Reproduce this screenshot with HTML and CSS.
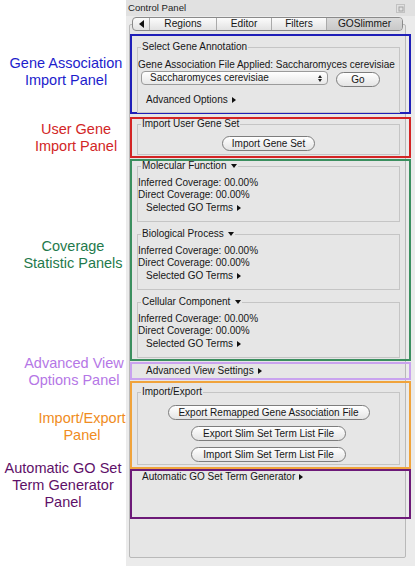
FILE: index.html
```html
<!DOCTYPE html>
<html>
<head>
<meta charset="utf-8">
<title>Control Panel</title>
<link rel="stylesheet" href="styles.css">
</head>
<body>
<div class="page">
  <div class="titlebar">
    <span class="title">Control Panel</span>
    <svg class="detach" viewBox="0 0 9 9" width="9" height="9">
      <rect x="0.5" y="0.5" width="8" height="8" fill="none" stroke="#a3a3a3" stroke-dasharray="1 1"/>
      <rect x="3" y="3" width="4" height="4" fill="none" stroke="#a3a3a3"/>
    </svg>
  </div>

  <div class="panel-bg"></div>

  <div class="tabs">
    <div class="tab"><span class="tri-left"></span></div>
    <div class="tab">Regions</div>
    <div class="tab">Editor</div>
    <div class="tab">Filters</div>
    <div class="tab selected">GOSlimmer</div>
  </div>

  <div class="label label-blue">Gene Association<br>Import Panel</div>
  <section class="box box-blue">
    <fieldset class="group group-annot">
      <legend>Select Gene Annotation</legend>
      <div class="line">Gene Association File Applied: Saccharomyces cerevisiae</div>
      <div class="select-row">
        <div class="select">
          <span>Saccharomyces cerevisiae</span>
          <span class="stepper"><span class="tri-up-s"></span><span class="tri-down-s"></span></span>
        </div>
        <button class="btn btn-go">Go</button>
      </div>
      <div class="disclosure">Advanced Options <span class="tri-right"></span></div>
    </fieldset>
  </section>

  <div class="label label-red">User Gene<br>Import Panel</div>
  <section class="box box-red">
    <fieldset class="group group-import">
      <legend>Import User Gene Set</legend>
      <button class="btn btn-center btn-import">Import Gene Set</button>
    </fieldset>
  </section>

  <div class="label label-green">Coverage<br>Statistic Panels</div>
  <section class="box box-green">
    <fieldset class="group group-stat">
      <legend>Molecular Function <span class="tri-down"></span></legend>
      <div class="line">Inferred Coverage: 00.00%</div>
      <div class="line">Direct Coverage: 00.00%</div>
      <div class="disclosure terms">Selected GO Terms <span class="tri-right"></span></div>
    </fieldset>
    <fieldset class="group group-stat">
      <legend>Biological Process <span class="tri-down"></span></legend>
      <div class="line">Inferred Coverage: 00.00%</div>
      <div class="line">Direct Coverage: 00.00%</div>
      <div class="disclosure terms">Selected GO Terms <span class="tri-right"></span></div>
    </fieldset>
    <fieldset class="group group-stat">
      <legend>Cellular Component <span class="tri-down"></span></legend>
      <div class="line">Inferred Coverage: 00.00%</div>
      <div class="line">Direct Coverage: 00.00%</div>
      <div class="disclosure terms">Selected GO Terms <span class="tri-right"></span></div>
    </fieldset>
  </section>

  <div class="label label-lilac">Advanced View<br>Options Panel</div>
  <section class="box box-lilac">
    <div class="disclosure view">Advanced View Settings <span class="tri-right"></span></div>
  </section>

  <div class="label label-orange">Import/Export<br>Panel</div>
  <section class="box box-orange">
    <fieldset class="group group-io">
      <legend>Import/Export</legend>
      <button class="btn btn-center btn-wide">Export Remapped Gene Association File</button>
      <button class="btn btn-center btn-mid">Export Slim Set Term List File</button>
      <button class="btn btn-center btn-mid">Import Slim Set Term List File</button>
    </fieldset>
  </section>

  <div class="label label-plum">Automatic GO Set<br>Term Generator<br>Panel</div>
  <section class="box box-plum">
    <div class="disclosure auto">Automatic GO Set Term Generator <span class="tri-right"></span></div>
  </section>
</div>
</body>
</html>
```

FILE: styles.css
```css
* { box-sizing: border-box; }

html, body { margin: 0; padding: 0; }

body {
  width: 415px;
  height: 566px;
  overflow: hidden;
  background: #fff;
  font-family: "Liberation Sans", Arial, sans-serif;
  font-size: 10px;
  color: #161616;
}

.page {
  display: grid;
  grid-template-columns: 126px 289px;
  grid-template-rows: 16px 18px 83px 42px 203px 19px 88px 50px 1fr;
  height: 566px;
  background: linear-gradient(to right, #fff 126px, #ebebeb 126px);
}

/* title bar */
.titlebar {
  grid-column: 2;
  grid-row: 1;
  display: flex;
  align-items: center;
  justify-content: space-between;
  padding: 0 10px 0 2px;
  background: #e1e1e1;
}
.title { font-size: 9.6px; line-height: 16px; color: #1e1e1e; }
.detach { display: block; }

/* tab content area */
.panel-bg {
  grid-column: 2;
  grid-row: 2 / 10;
  margin: 8px 9px 8px 3px;
  background: #e6e6e6;
  border: 1px solid #b9b9b9;
  border-radius: 2px;
}

/* segmented tabs */
.tabs {
  grid-column: 2;
  grid-row: 2;
  align-self: start;
  margin: 1px 12px 0 6px;
  height: 14px;
  display: grid;
  grid-template-columns: 16px 67px 55px 55px 1fr;
  border: 1px solid #8a8a8a;
  border-radius: 4px;
  overflow: hidden;
  background: linear-gradient(#fcfcfc, #e2e2e2);
}
.tab {
  display: flex;
  align-items: center;
  justify-content: center;
  font-size: 10.2px;
  line-height: 12px;
  border-left: 1px solid #aaaaaa;
  color: #161616;
}
.tab:first-child { border-left: none; }
.tab.selected { background: linear-gradient(#dadada, #c8c8c8); }

/* annotation labels */
.label {
  grid-column: 1;
  align-self: center;
  text-align: center;
  white-space: nowrap;
  font-family: "Liberation Sans", Arial, sans-serif;
  font-size: 14.5px;
  line-height: 17px;
}
.label-blue { grid-row: 3; color: #1d1dcc; padding-left: 6px; margin-bottom: 7px; }
.label-red { grid-row: 4; color: #d22626; padding-left: 26px; }
.label-green { grid-row: 5; color: #1f7a4c; padding-left: 20px; margin-bottom: 11px; }
.label-lilac { grid-row: 6; color: #b577e6; padding-left: 22px; }
.label-orange { grid-row: 7; color: #f08c22; padding-left: 38px; margin-top: 4px; }
.label-plum { grid-row: 8; color: #5e1068; margin-bottom: 17px; }

/* annotation boxes */
.box {
  grid-column: 2;
  align-self: start;
  margin-left: 4px;
  width: 281px;
  border: 2px solid;
}
.box-blue { grid-row: 3; height: 80px; border-color: #1f1fb8; }
.box-red { grid-row: 4; height: 41px; border-color: #d32424; }
.box-green { grid-row: 5; height: 202px; border-color: #3b8f5f; }
.box-lilac { grid-row: 6; height: 18px; border-color: #c9a3ef; }
.box-orange { grid-row: 7; height: 88px; border-color: #f0a33b; }
.box-plum { grid-row: 8; height: 50px; border-color: #6d1a78; }

/* titled groups */
.group {
  margin: 0 9px 0 5px;
  padding: 0;
  border: 1px solid #c5c5c5;
  min-width: 0;
}
.group legend {
  margin-left: 3px;
  padding: 0 1px;
  font-size: 10px;
  line-height: 10px;
  color: #161616;
}
.group-annot { margin-top: 6px; padding-top: 7px; padding-bottom: 6px; }
.group-import { padding-top: 7px; padding-bottom: 3px; }
.group-stat { padding-top: 6px; padding-bottom: 7px; }
.group-stat + .group-stat { margin-top: 7px; }
.group-io { margin-top: 4px; padding-top: 8px; padding-bottom: 2px; }

.line { line-height: 12px; white-space: nowrap; }

.disclosure {
  display: flex;
  align-items: center;
  gap: 4px;
  line-height: 12px;
  white-space: nowrap;
}
.group-annot .disclosure { margin: 7px 0 0 8px; }
.terms { margin-left: 8px; line-height: 13px; }
.view { margin: 1px 0 0 14px; }
.auto { margin: 0 0 0 10px; }

/* select */
.select-row { display: flex; align-items: flex-start; margin-left: 3px; }
.select {
  width: 187px;
  height: 14px;
  display: flex;
  align-items: center;
  justify-content: space-between;
  padding: 0 5px 0 8px;
  border: 1px solid #9b9b9b;
  border-radius: 4px;
  background: linear-gradient(#ffffff, #e8e8e8);
  line-height: 12px;
}
.stepper { display: flex; flex-direction: column; gap: 1px; }

/* buttons */
.btn {
  font-family: inherit;
  font-size: 10px;
  line-height: 13px;
  height: 15px;
  padding: 0;
  color: #161616;
  border: 1px solid #7d7d7d;
  border-radius: 8px;
  background: linear-gradient(#ffffff, #e4e4e4);
}
.btn-go { width: 44px; margin: 1px 0 0 8px; }
.btn-center { display: block; margin-left: auto; margin-right: auto; }
.btn-import { width: 93px; }
.btn-wide { width: 202px; }
.btn-mid { width: 155px; }
.btn-center + .btn-center { margin-top: 6px; }

/* triangles */
.tri-right {
  width: 0; height: 0;
  border-left: 4px solid #111;
  border-top: 3px solid transparent;
  border-bottom: 3px solid transparent;
}
.tri-left {
  width: 0; height: 0;
  border-right: 5px solid #111;
  border-top: 4px solid transparent;
  border-bottom: 4px solid transparent;
}
.tri-down {
  display: inline-block;
  vertical-align: middle;
  margin-left: 2px;
  width: 0; height: 0;
  border-top: 4px solid #111;
  border-left: 3.5px solid transparent;
  border-right: 3.5px solid transparent;
}
.tri-up-s {
  width: 0; height: 0;
  border-bottom: 3px solid #222;
  border-left: 2.5px solid transparent;
  border-right: 2.5px solid transparent;
}
.tri-down-s {
  width: 0; height: 0;
  border-top: 3px solid #222;
  border-left: 2.5px solid transparent;
  border-right: 2.5px solid transparent;
}
```
